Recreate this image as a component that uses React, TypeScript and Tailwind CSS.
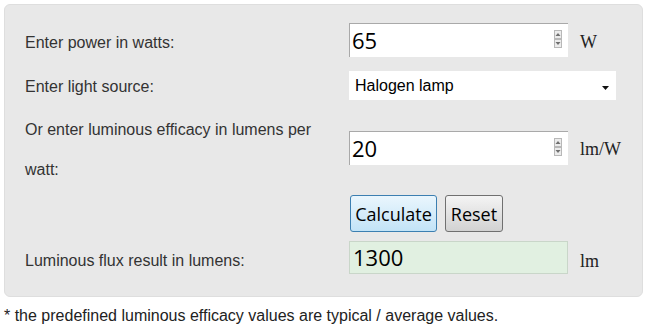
import { useState } from 'react'

function Spinner() {
  return (
    <svg width="8" height="18" viewBox="0 0 8 18" className="absolute right-[6px] top-[6px]">
      <rect x="0.5" y="0.5" width="7" height="8" fill="#ececec" stroke="#b8b8b8" />
      <rect x="0.5" y="9.5" width="7" height="8" fill="#ececec" stroke="#b8b8b8" />
      <path d="M1.5 6 L4 3 L6.5 6 Z" fill="#6f6f6f" />
      <path d="M1.5 12 L4 15 L6.5 12 Z" fill="#6f6f6f" />
    </svg>
  )
}

function NumberBox({ value }: { value: string }) {
  return (
    <div className="relative w-[219px] h-[34px] bg-white border-t border-l border-[#a9a9a9] pl-[2px] font-['Open_Sans'] text-[22px] leading-[33px] text-black">
      {value}
      <Spinner />
    </div>
  )
}

export default function App() {
  const [power] = useState('65')
  const [efficacy] = useState('20')
  const result = String(Number(power) * Number(efficacy))

  return (
    <div className="w-[649px] h-[333px] bg-white pl-[4px] pt-[4px] font-['Liberation_Sans',Arial,sans-serif] text-[16px]">
      <div className="w-[639px] h-[293px] rounded-[6px] bg-[#e8e8e8] border border-[#dedede] pl-[20px] pt-[18px] text-[#333]">
        {/* power */}
        <div className="flex h-[34px]">
          <div className="w-[324px] leading-[40px]">Enter power in watts:</div>
          <NumberBox value={power} />
          <div className="ml-[12px] pt-[2px] leading-[34px] font-['Liberation_Serif',serif] text-[18px] text-[#222]">W</div>
        </div>

        {/* light source */}
        <div className="flex h-[29px] mt-[14px]">
          <div className="w-[324px] leading-[40px] -mt-[4px]">Enter light source:</div>
          <div className="relative w-[267px] h-[29px] bg-white pl-[6px] leading-[29px] text-black">
            Halogen lamp
            <svg width="7" height="4" viewBox="0 0 7 4" className="absolute right-[7px] top-[15px]">
              <path d="M0 0 H7 L3.5 4 Z" fill="#111" />
            </svg>
          </div>
        </div>

        {/* efficacy */}
        <div className="flex h-[80px] mt-[10px]">
          <div className="w-[324px] pr-[14px] leading-[40px]">Or enter luminous efficacy in lumens per watt:</div>
          <div className="flex mt-[21px] h-[34px]">
            <NumberBox value={efficacy} />
            <div className="ml-[12px] pt-[1px] leading-[34px] font-['Liberation_Serif',serif] text-[18px] text-[#222]">lm/W</div>
          </div>
        </div>

        {/* buttons */}
        <div className="flex h-[37px] mt-[5px] pl-[325px] gap-[8px] font-['Open_Sans'] text-[18px] text-black">
          <button className="w-[87px] h-[37px] rounded-[3px] border border-[#3c7fb1] bg-gradient-to-b from-[#eaf6fd] to-[#c2e3f7] leading-none">
            Calculate
          </button>
          <button className="w-[58px] h-[37px] rounded-[3px] border border-[#707070] bg-gradient-to-b from-[#f4f4f4] to-[#d2d2d2] leading-none">
            Reset
          </button>
        </div>

        {/* result */}
        <div className="flex h-[33px] mt-[9px]">
          <div className="w-[324px] leading-[40px]">Luminous flux result in lumens:</div>
          <div className="w-[219px] h-[33px] bg-[#e1f0e1] border border-[#c9d6c9] pl-[3px] font-['Open_Sans'] text-[22px] leading-[31px] text-black">
            {result}
          </div>
          <div className="ml-[12px] pt-[4px] leading-[33px] font-['Liberation_Serif',serif] text-[18px] text-[#222]">lm</div>
        </div>
      </div>
      <p className="mt-[10px] leading-[18px] text-[#222]">
        * the predefined luminous efficacy values are typical / average values.
      </p>
    </div>
  )
}
